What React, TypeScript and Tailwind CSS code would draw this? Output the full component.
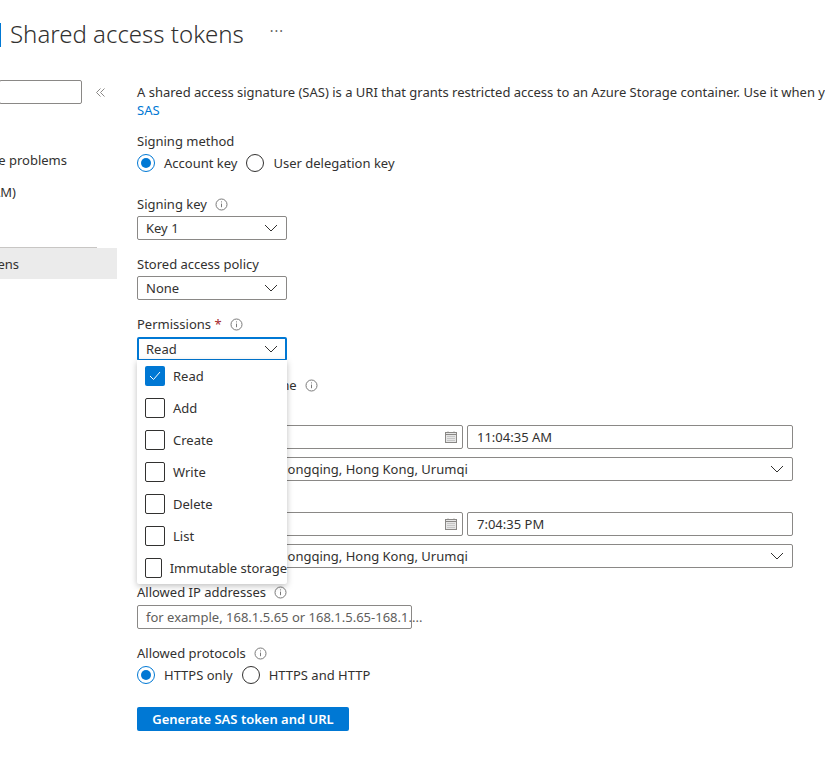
import type { ReactNode } from 'react';

const font = { fontFamily: '"Noto Sans", "Liberation Sans", sans-serif' };

function Info() {
  return (
    <svg width="13" height="13" viewBox="0 0 13 13" fill="none" className="shrink-0">
      <circle cx="6.5" cy="6.5" r="5.5" stroke="#7a7a7a" strokeWidth="1" />
      <path d="M6.5 5.6v3.6" stroke="#7a7a7a" strokeWidth="1" />
      <path d="M6.5 3.4v1" stroke="#7a7a7a" strokeWidth="1" />
    </svg>
  );
}

function Chevron() {
  return (
    <svg width="14" height="8" viewBox="0 0 14 8" fill="none" className="shrink-0">
      <path d="M1 1l6 6 6-6" stroke="#323130" strokeWidth="1" />
    </svg>
  );
}

function CalendarIcon() {
  return (
    <svg width="12" height="12" viewBox="0 0 12 12" fill="none" className="shrink-0">
      <rect x="0.5" y="1.5" width="11" height="10" fill="#e6e6e6" stroke="#8a8886" />
      <path d="M0.5 3.5h11" stroke="#8a8886" />
      <path d="M3 0.5v1.5M9 0.5v1.5" stroke="#8a8886" />
      <path d="M2.5 5.5h7M2.5 7.5h7M2.5 9.5h7" stroke="#a6a6a6" strokeDasharray="1 1" />
    </svg>
  );
}

function Radio({ on, label }: { on?: boolean; label: string }) {
  return (
    <div className="flex items-center">
      <span className={`flex h-[18px] w-[18px] items-center justify-center rounded-full border ${on ? 'border-[#0078d4]' : 'border-[#323130]'}`}>
        {on && <span className="h-[10px] w-[10px] rounded-full bg-[#0078d4]" />}
      </span>
      <span className="ml-[9px] text-[#323130]">{label}</span>
    </div>
  );
}

function Label({ children, info, className = '' }: { children: ReactNode; info?: boolean; className?: string }) {
  return (
    <div className={`flex h-[18px] items-center text-[#323130] ${className}`}>
      <span className="whitespace-nowrap">{children}</span>
      {info && <span className="ml-2"><Info /></span>}
    </div>
  );
}

function Select({ value, className = '' }: { value: string; className?: string }) {
  return (
    <div className={`flex h-[24px] items-center justify-between rounded-[2px] border border-[#8a8886] bg-white pl-2 pr-2 text-[#323130] ${className}`}>
      <span className="whitespace-nowrap">{value}</span>
      <Chevron />
    </div>
  );
}

function DateRow({ time }: { time: string }) {
  return (
    <div className="flex flex-col gap-2">
      <div className="flex gap-1">
        <div className="flex h-[24px] w-[326px] items-center justify-end rounded-[2px] border border-[#8a8886] bg-white pr-[5px]">
          <CalendarIcon />
        </div>
        <div className="flex h-[24px] w-[326px] items-center rounded-[2px] border border-[#8a8886] bg-white pl-[9px] text-[#323130]">
          {time}
        </div>
      </div>
      <Select value="(UTC+08:00) Beijing, Chongqing, Hong Kong, Urumqi" className="w-[656px]" />
    </div>
  );
}

const navItems = [
  { label: 'Diagnose and solve problems', y: 'mt-[47px]', end: 'pr-[50px]' },
  { label: 'Access Control (IAM)', y: 'mt-[14px]', end: 'pr-[101px]' },
];

const permissions = ['Read', 'Add', 'Create', 'Write', 'Delete', 'List', 'Immutable storage'];

export default function App() {
  return (
    <div className="h-[766px] w-[825px] overflow-hidden bg-white text-[13px] leading-[18px]" style={font}>
      {/* Header */}
      <div className="flex h-[80px] items-start pt-[23px]">
        <div className="h-[24px] w-[1px] bg-[#0078d4]" />
        <h1 className="ml-[9px] whitespace-nowrap text-[24px] font-light leading-[20px] mt-[1px] text-[#323130]">Shared access tokens</h1>
        <span className="ml-[26px] mt-[-1px] text-[14px] tracking-[1px] text-[#605e5c]">···</span>
      </div>

      <div className="flex">
        {/* Sidebar */}
        <div className="w-[117px] shrink-0 overflow-hidden">
          <div className="flex items-center">
            <div className="-ml-[1px] h-[24px] w-[83px] rounded-[2px] border border-[#8a8886]" />
            <svg width="9" height="9" viewBox="0 0 9 9" fill="none" className="ml-[14px]">
              <path d="M4.5 0.5L0.5 4.5l4 4M8.5 0.5l-4 4 4 4" stroke="#8a8886" strokeWidth="1" />
            </svg>
          </div>
          {navItems.map((item) => (
            <div key={item.label} className={`flex h-[18px] justify-end whitespace-nowrap text-[#323130] ${item.y} ${item.end}`}>
              {item.label}
            </div>
          ))}
          <div className="mt-[46px] h-[1px] w-[97px] bg-[#c8c6c4]" />
          <div className="flex h-[31px] items-center justify-end whitespace-nowrap bg-[#ebebeb] pr-[98px] text-[#323130]">
            Shared access tokens
          </div>
        </div>

        {/* Form */}
        <div className="ml-[20px] min-w-0 flex-1">
          <div className="mt-[3px] whitespace-nowrap text-[#323130]">
            A shared access signature (SAS) is a URI that grants restricted access to an Azure Storage container. Use it when you want to grant access to storage account resources
          </div>
          <a className="block text-[#0078d4]">SAS</a>

          <Label className="mt-[13px]">Signing method</Label>
          <div className="mt-[3px] flex h-[20px] gap-[9px]">
            <Radio on label="Account key" />
            <Radio label="User delegation key" />
          </div>

          <Label info className="mt-[22px]">Signing key</Label>
          <Select value="Key 1" className="mt-[3px] w-[150px]" />

          <Label className="mt-[15px]">Stored access policy</Label>
          <Select value="None" className="mt-[3px] w-[150px]" />

          <Label info className="mt-[15px]">
            Permissions <span className="text-[#a4262c]">*</span>
          </Label>

          <div className="relative">
            <div className="mt-[4px] flex h-[24px] w-[150px] items-center justify-between rounded-[2px] border-2 border-[#0078d4] bg-white pl-[7px] pr-[7px] text-[#323130]">
              <span>Read</span>
              <Chevron />
            </div>
            {/* Open permissions menu */}
            <div className="absolute left-0 top-[23px] z-10 w-[150px] rounded-b-[2px] bg-white py-0 shadow-[0_2px_6px_rgba(0,0,0,0.25)]">
              {permissions.map((p, i) => (
                <div key={p} className="flex h-[32px] items-center pl-2 text-[#323130]">
                  {i === 0 ? (
                    <span className="flex h-[20px] w-[20px] items-center justify-center rounded-[2px] bg-[#0078d4]">
                      <svg width="12" height="10" viewBox="0 0 12 10" fill="none">
                        <path d="M1 5l3.5 3.5L11 1" stroke="#fff" strokeWidth="1" />
                      </svg>
                    </span>
                  ) : (
                    <span className="h-[20px] w-[20px] rounded-[2px] border border-[#323130]" />
                  )}
                  <span className="ml-2 whitespace-nowrap">{p}</span>
                </div>
              ))}
            </div>

            <Label info className="mt-[15px]">Start and expiry date/time</Label>
            <Label className="mt-[10px]">Start</Label>
            <div className="mt-[3px]">
              <DateRow time="11:04:35 AM" />
            </div>
            <Label className="mt-[9px]">Expiry</Label>
            <div className="mt-[4px]">
              <DateRow time="7:04:35 PM" />
            </div>
          </div>

          <Label info className="mt-[15px]">Allowed IP addresses</Label>
          <div className="mt-[4px] flex h-[24px] w-[275px] items-center rounded-[2px] border border-[#8a8886] pl-2 text-[#605e5c]">
            <span className="whitespace-nowrap">for example, 168.1.5.65 or 168.1.5.65-168.1....</span>
          </div>

          <Label info className="mt-[15px]">Allowed protocols</Label>
          <div className="mt-[3px] flex h-[20px] gap-[9px]">
            <Radio on label="HTTPS only" />
            <Radio label="HTTPS and HTTP" />
          </div>

          <button className="mt-[22px] flex h-[24px] w-[212px] items-center justify-center rounded-[2px] bg-[#0078d4] font-semibold text-white">
            Generate SAS token and URL
          </button>
        </div>
      </div>
    </div>
  );
}
